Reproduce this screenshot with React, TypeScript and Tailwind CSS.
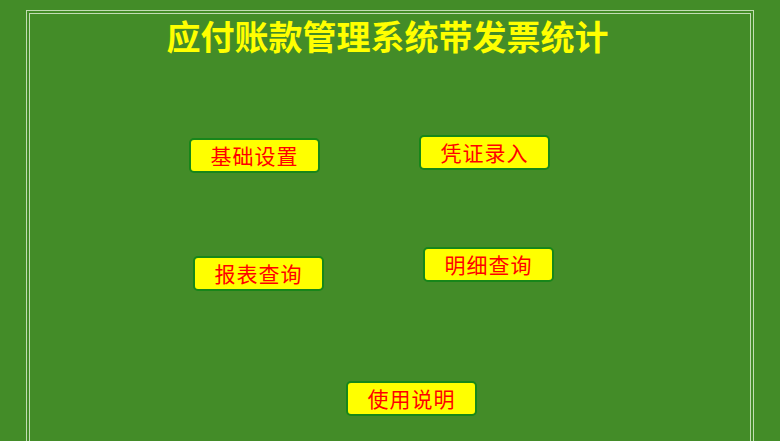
const buttonClass =
  "w-[131px] h-[35px] shrink-0 flex items-center justify-center bg-[#ffff00] border-2 border-solid border-[#17861a] rounded-[5px] text-[#ff0000] text-[21px] tracking-[1px] leading-none";

function MenuButton({ label, className }: { label: string; className: string }) {
  return (
    <button type="button" className={`${buttonClass} ${className}`}>
      {label}
    </button>
  );
}

export default function App() {
  return (
    <div
      className="w-full h-[441px] overflow-hidden bg-[#438c28] pt-[10px] px-[26px]"
      style={{ fontFamily: '"Noto Sans CJK SC", "Noto Sans", sans-serif' }}
    >
      <div className="h-[440px] border-[4px] border-double border-[#c2dcb4]">
        <div className="h-[50px] pr-[5px] text-center text-[34px] font-bold leading-[44px] text-[#ffff00]">
          应付账款管理系统带发票统计
        </div>

        <div className="mt-[71px] flex items-start">
          <MenuButton label="基础设置" className="ml-[159px] mt-[3px]" />
          <MenuButton label="凭证录入" className="ml-[99px]" />
        </div>

        <div className="mt-[74px] flex items-start">
          <MenuButton label="报表查询" className="ml-[163px] mt-[9px]" />
          <MenuButton label="明细查询" className="ml-[99px]" />
        </div>

        <div className="mt-[90px] flex items-start">
          <MenuButton label="使用说明" className="ml-[316px]" />
        </div>
      </div>
    </div>
  );
}
